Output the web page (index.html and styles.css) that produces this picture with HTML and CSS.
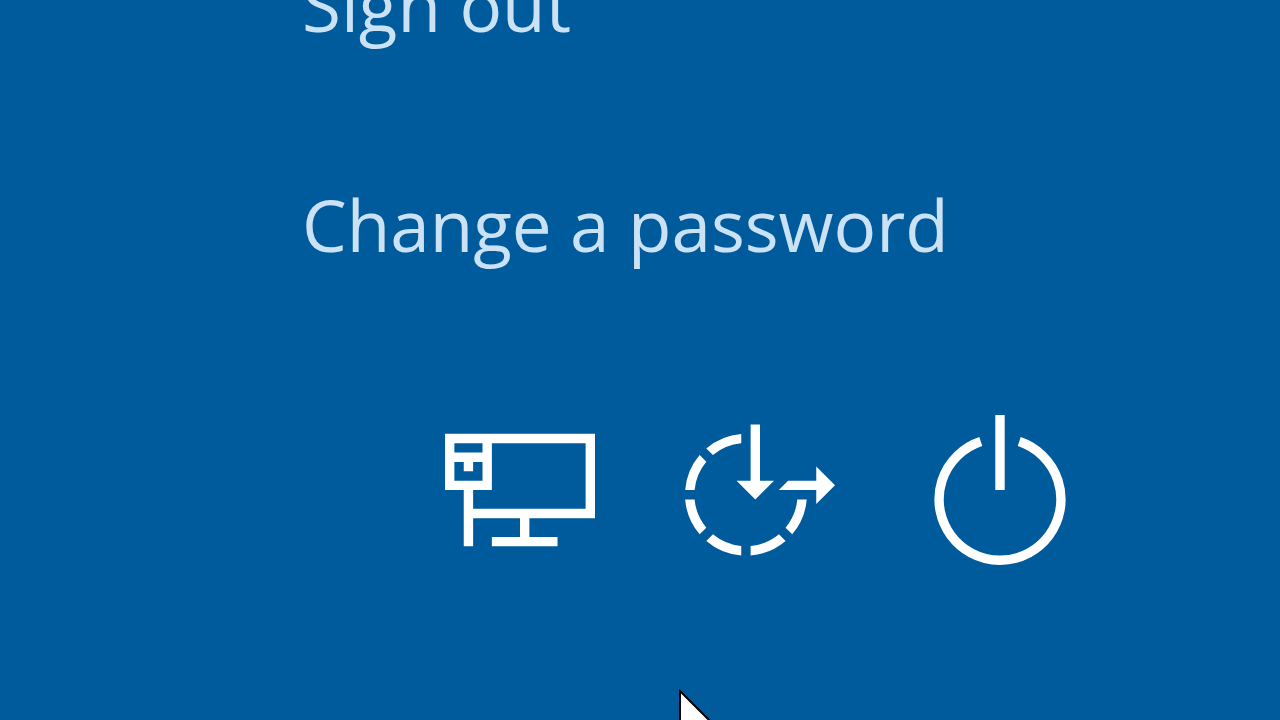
FILE: index.html
```
<!DOCTYPE html>
<html lang="en">
  <head>
    <meta charset="UTF-8" />
    <meta name="viewport" content="width=device-width, initial-scale=1.0" />
    <title>Security options</title>
    <link rel="stylesheet" href="styles.css">
  </head>
  <body>
    <main class="screen">
      <div class="menu">
        <button class="menu-item" type="button">Sign out</button>
        <button class="menu-item" type="button">Change a password</button>
      </div>

      <div class="actions">
        <button class="action" type="button" aria-label="Network">
          <svg class="icon" viewBox="0 -2 16 16">
            <path fill-rule="evenodd" d="M0 0H16V9H9V11H12V12H5V11H8V9H3V12H2V6H0ZM5 1V6H3V8H15V1ZM1 1V2H4V1ZM1 3V5H4V3H3V4H2V3Z" />
          </svg>
        </button>
        <button class="action" type="button" aria-label="Ease of access">
          <svg class="icon" viewBox="0 -1 16 16">
            <defs>
              <g id="quarter">
                <path d="M6.481 .5A6.5 6.5 0 0 1 4.937 4.229L4.227 3.519A5.5 5.5 0 0 0 5.477 .5Z" />
                <path d="M.5 6.481A6.5 6.5 0 0 0 4.229 4.937L3.519 4.227A5.5 5.5 0 0 1 .5 5.477Z" />
              </g>
            </defs>
            <g transform="translate(6.5 7.5)">
              <use href="#quarter" />
              <use href="#quarter" transform="rotate(90)" />
              <use href="#quarter" transform="rotate(180)" />
            </g>
            <path d="M7 0H8V6H9.5L7.5 8L5.5 6H7Z" />
            <path d="M11 6H14V4.5L16 6.5L14 8.5V7H10Z" />
          </svg>
        </button>
        <button class="action" type="button" aria-label="Power">
          <svg class="icon" viewBox="-1 0 16 16">
            <path d="M6.5 0H7.5V8H6.5Z" />
            <path class="ring" d="M4.95 2.83A6.5 6.5 0 1 0 9.05 2.83" />
          </svg>
        </button>
      </div>

      <svg class="cursor" viewBox="0 0 50 76">
        <path d="M1 2V68L16 54L27 75L37 70L27 49H48Z" />
      </svg>
    </main>
  </body>
</html>
```

FILE: styles.css
```
:root {
  --background: #005b9c;
  --text: #cbe2f5;
}
html,
body {
  padding: 0;
  margin: 0;
}
body {
  background-color: var(--background);
  font-family: "Open Sans", "Noto Sans", sans-serif;
}

button {
  padding: 0;
  border: 0;
  background: none;
  color: inherit;
  font: inherit;
  cursor: pointer;
}

.screen {
  position: relative;
  box-sizing: border-box;
  height: 100vh;
  overflow: hidden;
}

/* the list is scrolled, the first item is cut by the top edge */
.menu {
  display: flex;
  flex-direction: column;
  align-items: flex-start;
  gap: 120px;
  margin-top: -45px;
  padding-left: 302px;
}
.menu-item {
  color: var(--text);
  font-size: 71px;
  line-height: 100px;
  white-space: nowrap;
}

.actions {
  display: flex;
  gap: 90px;
  margin-top: 140px;
  padding-left: 445px;
}
.action {
  display: flex;
  color: white;
}
.icon {
  width: 150px;
  height: 150px;
  fill: currentColor;
}
.ring {
  fill: none;
  stroke: currentColor;
  stroke-width: 1;
}

.cursor {
  position: absolute;
  top: 689px;
  left: 679px;
  width: 50px;
  height: 76px;
  fill: white;
  stroke: black;
  stroke-width: 2;
  pointer-events: none;
}
```
